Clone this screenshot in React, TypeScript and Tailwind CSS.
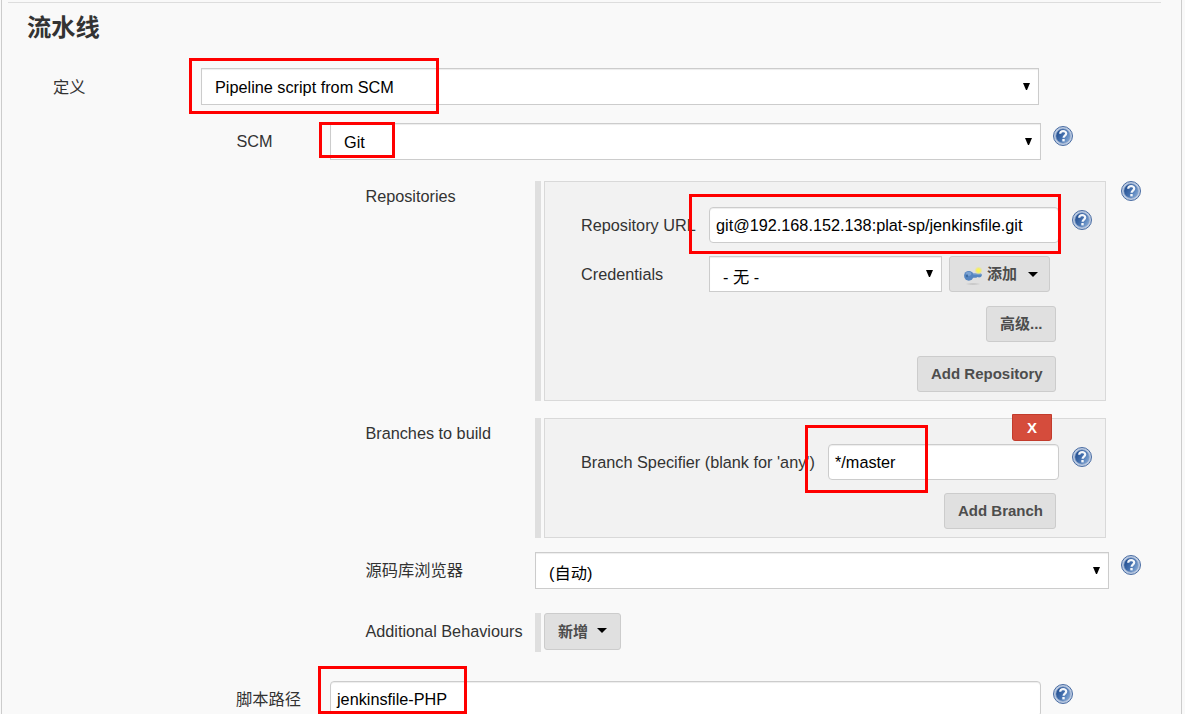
import type { ReactNode } from 'react';

function HelpIcon({ className = '' }: { className?: string }) {
  return (
    <svg className={`h-5 w-5 shrink-0 ${className}`} viewBox="0 0 20 20">
      <defs>
        <linearGradient id="disc" x1="0" y1="0.2" x2="1" y2="0.8">
          <stop offset="0" stopColor="#1f4a8c" />
          <stop offset="0.5" stopColor="#4470ae" />
          <stop offset="1" stopColor="#86abd8" />
        </linearGradient>
      </defs>
      <circle cx="10" cy="10" r="9.500" fill="#bccbe2" stroke="#4a6da3" strokeWidth="1" />
      <circle cx="10" cy="10" r="7.200" fill="url(#disc)" stroke="#7f9cc6" strokeWidth="0.700" />
      <path d="M7.200 7.700C7.300 6 8.500 5.200 10.200 5.200c1.800 0 3 .8 3 2.300 0 2-2.600 2.200-2.600 4.200" fill="none" stroke="#f4f7fb" strokeWidth="2.200" />
      <rect x="9.300" y="13" width="2.400" height="2.400" fill="#f4f7fb" />
    </svg>
  );
}

function KeyIcon() {
  return (
    <svg className="h-6 w-5 shrink-0" viewBox="0 0 20 24">
      <defs>
        <radialGradient id="keyShadow">
          <stop offset="0" stopColor="#bdbdbd" />
          <stop offset="1" stopColor="#e0e0e0" />
        </radialGradient>
        <radialGradient id="spark">
          <stop offset="0" stopColor="#fff64a" />
          <stop offset="0.500" stopColor="#f5ee62" />
          <stop offset="1" stopColor="#e6e3a5" stopOpacity="0.400" />
        </radialGradient>
      </defs>
      <ellipse cx="10" cy="22" rx="8" ry="1.400" fill="url(#keyShadow)" />
      <path d="M8 11.500h10l1 1.500-1 2-2 .6-1.300-.6-1.500.8H8z" fill="#5686c0" />
      <path d="M9 12.200h9" stroke="#7ba3d3" strokeWidth="1" />
      <ellipse cx="5.800" cy="13.800" rx="4.700" ry="4.900" fill="#5585c0" />
      <ellipse cx="5.500" cy="11.800" rx="2.800" ry="2" fill="#7ba2d2" />
      <ellipse cx="4" cy="13.800" rx="0.900" ry="1.500" fill="#396599" />
      <circle cx="15.500" cy="8.500" r="3.700" fill="url(#spark)" />
    </svg>
  );
}

function Caret({ className = '' }: { className?: string }) {
  return (
    <svg className={`h-[5px] w-[10px] shrink-0 ${className}`} viewBox="0 0 10 5">
      <path d="M0 0h10L5 5z" fill="#000" />
    </svg>
  );
}

function Select({ children, className }: { children: ReactNode; className: string }) {
  return (
    <div className={`flex shrink-0 items-center justify-between border border-[#ccc] bg-white pr-[8px] pl-[13px] text-black shadow-[inset_0_1px_1px_rgba(0,0,0,0.075)] ${className}`}>
      <span className="pt-[2px] whitespace-pre">{children}</span>
      <svg className="mb-px h-[7px] w-[7px]" viewBox="0 0 7 7">
        <path d="M0 0h7L4 7H3z" fill="#000" />
      </svg>
    </div>
  );
}

function Input({ children, className }: { children: ReactNode; className: string }) {
  return (
    <div className={`flex shrink-0 items-center rounded border border-[#ccc] bg-white px-[6px] text-black shadow-[inset_0_1px_1px_rgba(0,0,0,0.075)] ${className}`}>
      {children}
    </div>
  );
}

function Button({ children, className }: { children: ReactNode; className: string }) {
  return (
    <button className={`flex h-9 shrink-0 items-center rounded-[3px] border border-[#ccc] bg-[#e0e0e0] px-[13px] text-[15px] font-bold whitespace-nowrap text-[#4d4d4d] ${className}`}>
      {children}
    </button>
  );
}

function Row({ label, className, labelClass, children }: { label: string; className: string; labelClass: string; children: ReactNode }) {
  return (
    <div className={`flex items-start ${className}`}>
      <div className={`shrink-0 whitespace-nowrap leading-[37px] ${labelClass}`}>{label}</div>
      {children}
    </div>
  );
}

export default function App() {
  return (
    <div className="relative h-[714px] w-[1185px] overflow-hidden bg-[#f9f9f9] pl-px font-['Liberation_Sans','Noto_Sans_CJK_SC',sans-serif] text-[16.25px] text-[#333]">
      <main className="h-[714px] w-[1181px] overflow-hidden border-x border-[#ccc] pt-[2px]">
        <div className="ml-[6px] h-px w-[1153px] bg-[#ddd]" />
        <h1 className="h-[65px] pl-[25px] text-[24.3px] leading-[49px] font-bold">流水线</h1>

        <Row label="定义" className="h-[55px]" labelClass="w-[199px] pl-[51px] pt-px">
          <Select className="h-[37px] w-[838px]">Pipeline script from SCM</Select>
        </Row>

        <Row label="SCM" className="h-[58px]" labelClass="w-[328px] pl-[234.4px]">
          <Select className="h-[37px] w-[711px]">Git</Select>
          <HelpIcon className="mt-[3px] ml-3" />
        </Row>

        <Row label="Repositories" className="h-[237px]" labelClass="w-[533px] pl-[363.4px] -mt-[3px]">
          <div className="h-[220px] w-[6px] shrink-0 bg-[#dfdfdf]" />
          <section className="ml-[3px] h-[220px] w-[562px] shrink-0 border border-[#d9d9d9] bg-[#f2f2f2] pt-[25px]">
            <div className="flex h-[49px] items-start pl-9">
              <span className="w-32 shrink-0 leading-9 whitespace-nowrap">Repository URL</span>
              <Input className="h-9 w-[350px]">git@192.168.152.138:plat-sp/jenkinsfile.git</Input>
              <HelpIcon className="mt-[3px] ml-[13px]" />
            </div>
            <div className="flex h-[50px] items-start pl-9">
              <span className="w-32 shrink-0 leading-9">Credentials</span>
              <Select className="h-9 w-[233px]"><span className="relative top-[2px]">- 无 -</span></Select>
              <Button className="ml-[7px] w-[101px]">
                <KeyIcon />
                <span className="ml-1">添加</span>
                <Caret className="ml-[11px]" />
              </Button>
            </div>
            <div className="flex h-[50px] items-start justify-end pr-[49px]">
              <Button className="w-[70px]">高级...</Button>
            </div>
            <div className="flex items-start justify-end pr-[49px]">
              <Button className="w-[139px]">Add Repository</Button>
            </div>
          </section>
          <HelpIcon className="ml-[15px]" />
        </Row>

        <Row label="Branches to build" className="h-[134px]" labelClass="w-[533px] pl-[363.4px] -mt-[3px]">
          <div className="h-[120px] w-[6px] shrink-0 bg-[#dfdfdf]" />
          <section className="relative ml-[3px] h-[120px] w-[562px] shrink-0 border border-[#d9d9d9] bg-[#f2f2f2] pt-[25px]">
            <button className="absolute -top-[5px] left-[467px] h-[27px] w-10 rounded-b-[3px] border border-[#c23b2c] bg-[#d54c3c] text-[15px] leading-[25px] font-bold text-white">X</button>
            <div className="flex h-[49px] items-start pl-9">
              <span className="w-[247px] shrink-0 leading-9 whitespace-nowrap">Branch Specifier (blank for 'any')</span>
              <Input className="h-9 w-[231px]">*/master</Input>
              <HelpIcon className="mt-[3px] ml-[13px]" />
            </div>
            <div className="flex items-start justify-end pr-[49px]">
              <Button className="w-[112px]">Add Branch</Button>
            </div>
          </section>
        </Row>

        <Row label="源码库浏览器" className="h-[61px]" labelClass="w-[533px] pl-[363.4px]">
          <Select className="h-[37px] w-[574px]"><span className="relative top-[2px]">(自动)</span></Select>
          <HelpIcon className="mt-[3px] ml-3" />
        </Row>

        <Row label="Additional Behaviours" className="h-[68px]" labelClass="w-[533px] pl-[363.4px]">
          <div className="h-[39px] w-[6px] shrink-0 bg-[#dfdfdf]" />
          <Button className="ml-[3px] h-[37px] w-[77px]">
            <span className="pt-px">新增</span>
            <Caret className="mb-[3px] ml-[9px]" />
          </Button>
        </Row>

        <Row label="脚本路径" className="h-[37px]" labelClass="w-[328px] pl-[234px]">
          <Input className="h-9 w-[711px]">jenkinsfile-PHP</Input>
          <HelpIcon className="mt-[3px] ml-3" />
        </Row>
      </main>

      <div className="absolute top-[58px] left-[189px] h-[56px] w-[250px] border-3 border-[#f00]" />
      <div className="absolute top-[122px] left-[319px] h-[36px] w-[76px] border-3 border-[#f00]" />
      <div className="absolute top-[194px] left-[689px] h-[60px] w-[372px] border-3 border-[#f00]" />
      <div className="absolute top-[425px] left-[805px] h-[68px] w-[123px] border-3 border-[#f00]" />
      <div className="absolute top-[666px] left-[318px] h-[48px] w-[149px] border-3 border-[#f00]" />
    </div>
  );
}
